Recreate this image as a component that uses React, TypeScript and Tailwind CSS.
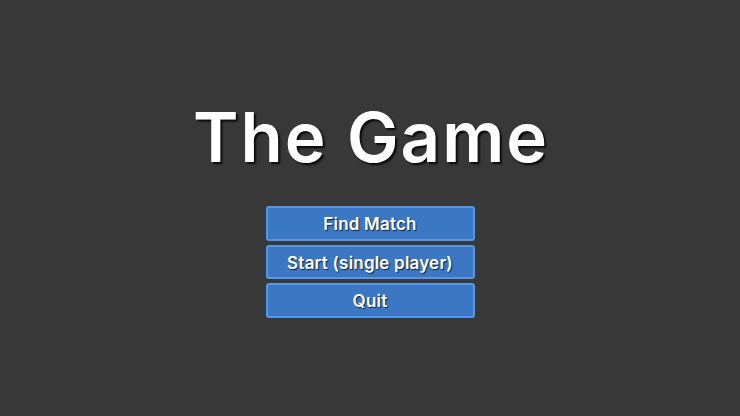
import React from "react";

const buttons = ["Find Match", "Start (single player)", "Quit"];

export default function App() {
  return (
    <div className="w-full h-[416px] bg-[#383838] flex flex-col items-center pt-[97px] font-['Inter',sans-serif]">
      <h1 className="pl-[2px] text-[69px] leading-[80px] font-semibold tracking-[2px] text-white [text-shadow:2px_2px_2px_rgba(0,0,0,0.85)]">
        The Game
      </h1>
      <div className="mt-[29px] w-[209px] flex flex-col gap-[4px]">
        {buttons.map((label) => (
          <button
            key={label}
            className="h-[34.5px] pt-[2px] rounded-[3px] border-2 border-[#5397ea] bg-[#3b77c3] text-white text-[17px] leading-[20px] font-semibold tracking-[0.2px] [text-shadow:1px_1px_1px_rgba(0,0,0,0.7)]"
          >
            {label}
          </button>
        ))}
      </div>
    </div>
  );
}
